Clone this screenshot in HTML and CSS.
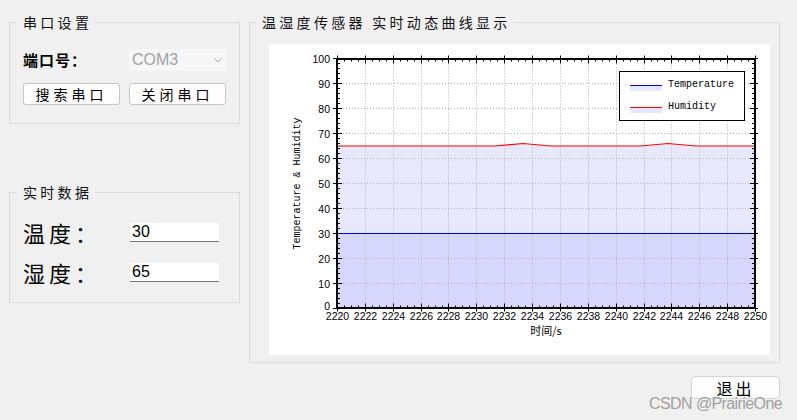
FILE: index.html
```html
<!DOCTYPE html>
<html lang="zh-CN">
<head>
    <meta charset="UTF-8">
    <meta name="viewport" content="width=device-width, initial-scale=1.0">
    <title>温湿度传感器</title>
    <link rel="stylesheet" href="styles.css">
</head>
<body>
    <div class="window">
        <div class="side">
            <fieldset class="group serial-group">
                <legend>串口设置</legend>
                <div class="serial-grid">
                    <span class="port-label">端口号：</span>
                    <div class="combo">
                        <span>COM3</span>
                        <svg class="chevron" width="8" height="5" viewBox="0 0 8 5"><polyline points="0.5,0.5 4,4 7.5,0.5" fill="none" stroke="#a6a6a6"/></svg>
                    </div>
                    <button class="btn">搜索串口</button>
                    <button class="btn">关闭串口</button>
                </div>
            </fieldset>
            <fieldset class="group data-group">
                <legend>实时数据</legend>
                <div class="data-grid">
                    <span class="data-label">温度：</span>
                    <input class="value-box" type="text" value="30">
                    <span class="data-label">湿度：</span>
                    <input class="value-box" type="text" value="65">
                </div>
            </fieldset>
        </div>
        <div class="main">
            <fieldset class="group chart-group">
                <legend>温湿度传感器 实时动态曲线显示</legend>
                <div class="chart-box">
                    <svg id="chart" width="501" height="311" viewBox="0 0 501 311"></svg>
                </div>
            </fieldset>
            <button class="btn exit-btn">退出</button>
        </div>
    </div>
    <div class="watermark">CSDN @PrairieOne</div>

    <script>
        const svg = document.getElementById('chart');
        const NS = 'http://www.w3.org/2000/svg';

        // plot area inside the white box
        const L = 68, R = 486, T = 14.5, B = 264.5;
        const X0 = 2220, X1 = 2250;
        const sx = v => L + (v - X0) * (R - L) / (X1 - X0);
        const sy = v => B - v * (B - T) / 100;

        function add(tag, attrs, parent) {
            const el = document.createElementNS(NS, tag);
            for (const k in attrs) el.setAttribute(k, attrs[k]);
            (parent || svg).appendChild(el);
            return el;
        }

        const humidity = [[2220, 65], [2231.35, 65], [2233.35, 66], [2235.35, 65],
                          [2241.76, 65], [2243.76, 66], [2245.76, 65], [2250, 65]];
        const temperature = [[2220, 30], [2250, 30]];

        function pts(data) {
            return data.map(p => sx(p[0]).toFixed(2) + ',' + sy(p[1]).toFixed(2)).join(' ');
        }
        function area(data) {
            return pts(data) + ' ' + R + ',' + B + ' ' + L + ',' + B;
        }

        // filled areas
        add('polygon', { points: area(humidity), fill: '#e8e8fd' });
        add('polygon', { points: area(temperature), fill: '#d7d7fd' });

        // dotted grid
        for (let v = 10; v < 100; v += 10) {
            add('line', { x1: L, x2: R, y1: sy(v), y2: sy(v), class: 'grid' });
        }
        for (let v = X0 + 2; v < X1; v += 2) {
            const x = Math.round(sx(v)) + 0.5;
            add('line', { x1: x, x2: x, y1: T, y2: B, class: 'grid' });
        }

        // curves
        add('polyline', { points: pts(humidity), fill: 'none', stroke: '#ff0000', 'stroke-width': 1.2 });
        add('polyline', { points: pts(temperature), fill: 'none', stroke: '#0000e0', 'stroke-width': 1 });

        // axes box
        add('rect', { x: L, y: T + 0.5, width: R - L, height: B - T - 1, fill: 'none', stroke: '#000', 'stroke-width': 2 });

        // x ticks
        for (let i = 0; i <= 60; i++) {
            const x = Math.round(sx(X0 + i / 2)) + 0.5;
            const major = i % 4 === 0;
            add('line', { x1: x, x2: x, y1: B, y2: B - (major ? 5 : 3), class: 'tick' });
            add('line', { x1: x, x2: x, y1: T, y2: T + (major ? 5 : 3), class: 'tick' });
            if (major) {
                add('line', { x1: x, x2: x, y1: B, y2: B + 3, class: 'tick' });
                add('line', { x1: x, x2: x, y1: T, y2: T - 3, class: 'tick' });
                const t = add('text', { x: x, y: 275.5, 'text-anchor': 'middle', class: 'tick-label' });
                t.textContent = X0 + i / 2;
            }
        }

        // y ticks
        for (let v = 0; v <= 100; v += 2) {
            const y = sy(v);
            const major = v % 10 === 0;
            add('line', { x1: L, x2: L + (major ? 5 : 3), y1: y, y2: y, class: 'tick' });
            add('line', { x1: R, x2: R - (major ? 5 : 3), y1: y, y2: y, class: 'tick' });
            if (major) {
                add('line', { x1: L, x2: L - 4, y1: y, y2: y, class: 'tick' });
                add('line', { x1: R, x2: R + 3, y1: y, y2: y, class: 'tick' });
                const t = add('text', { x: 61, y: v === 0 ? y + 1 : y + 4, 'text-anchor': 'end', class: 'tick-label' });
                t.textContent = v;
            }
        }

        // axis titles
        const yt = add('text', { transform: 'translate(31,139.5) rotate(-90)', 'text-anchor': 'middle', class: 'mono-label' });
        yt.textContent = 'Temperature & Humidity';
        const xt = add('text', { x: 277, y: 291, 'text-anchor': 'middle', class: 'axis-title' });
        xt.textContent = '时间/s';

        // legend
        add('rect', { x: 350.5, y: 27.5, width: 125, height: 49, fill: '#fff', stroke: '#000' });
        const items = [['Temperature', '#0000e0', 41.5, 43], ['Humidity', '#ff0000', 63.5, 65]];
        items.forEach(it => {
            add('rect', { x: 361, y: it[2] + 0.5, width: 32, height: 5, fill: '#e6e6fd' });
            add('line', { x1: 361, x2: 393, y1: it[2], y2: it[2], stroke: it[1] });
            const t = add('text', { x: 399, y: it[3], class: 'mono-label' });
            t.textContent = it[0];
        });
    </script>
</body>
</html>
```

FILE: styles.css
```css
* {
    box-sizing: border-box;
}

body {
    margin: 0;
    width: 797px;
    height: 420px;
    overflow: hidden;
    position: relative;
    background: #f0f0f0;
    color: #000;
    font-family: "Noto Sans CJK SC", sans-serif;
}

.window {
    display: flex;
    gap: 9px;
    padding: 12px 0 0 9px;
}

.side {
    width: 231px;
    display: flex;
    flex-direction: column;
}

.main {
    width: 531px;
    display: flex;
    flex-direction: column;
}

/* group boxes */
.group {
    margin: 0;
    min-width: 0;
    border: 1px solid #d9d9d9;
}

.group legend {
    font-size: 14px;
    line-height: 20px;
    letter-spacing: 3.3px;
    padding: 0 3px 0 6px;
    color: #111;
}

.serial-group {
    padding: 17px 0 18px 7px;
}

.serial-grid {
    margin-left: 6px;
    display: grid;
    grid-template-columns: 97px 98px;
    grid-template-rows: 22px 22px;
    column-gap: 9px;
    row-gap: 12px;
    align-items: center;
}

.port-label {
    font-size: 15px;
    font-weight: bold;
    letter-spacing: 1px;
    line-height: 22px;
}

.combo {
    height: 22px;
    background: #f6f6f6;
    display: flex;
    align-items: center;
    justify-content: space-between;
    padding: 0 5px 0 3px;
    color: #a2a2a2;
    font-family: "Liberation Sans Narrow", "Liberation Sans", sans-serif;
    font-size: 16px;
}

.btn {
    width: 97px;
    height: 22px;
    padding: 0;
    background: #fdfdfd;
    border: 1px solid #c6c6c6;
    border-radius: 3px;
    color: #000;
    font-family: "Noto Sans CJK SC", sans-serif;
    font-size: 14px;
    line-height: 20px;
    letter-spacing: 4px;
}

.data-group {
    margin-top: 58px;
    padding: 18px 0 18px 7px;
}

.data-grid {
    margin-left: 6px;
    display: grid;
    grid-template-columns: 107px 89px;
    grid-template-rows: 24px 24px;
    row-gap: 16px;
    align-items: center;
}

.data-label {
    font-size: 22px;
    line-height: 24px;
    letter-spacing: 4px;
}

.value-box {
    width: 89px;
    height: 19px;
    border: 0;
    border-bottom: 1px solid #7a7a7a;
    background: #fff;
    padding: 0 2px;
    outline: none;
    color: #000;
    font-family: "Liberation Sans", sans-serif;
    font-size: 16px;
}

/* chart */
.chart-group {
    padding: 12px 9px 7px 6px;
}

.chart-box {
    margin-left: 13px;
    width: 501px;
    height: 311px;
    background: #fff;
}

#chart {
    display: block;
}

#chart .grid {
    stroke: #b0b0b0;
    stroke-width: 1;
    stroke-dasharray: 1 2;
}

#chart .tick {
    stroke: #000;
    stroke-width: 1;
}

#chart .tick-label {
    font-family: "Liberation Sans", sans-serif;
    font-size: 10.5px;
    fill: #000;
}

#chart .mono-label {
    font-family: "Liberation Mono", monospace;
    font-size: 10px;
    fill: #000;
}

#chart .axis-title {
    font-family: "Noto Sans CJK SC", sans-serif;
    font-size: 11px;
    fill: #000;
}

.exit-btn {
    align-self: flex-end;
    margin-top: 13px;
    width: 89px;
    height: 23px;
    font-size: 16px;
    letter-spacing: 3px;
    border-color: #d2d2d2;
    border-radius: 4px;
}

.watermark {
    position: absolute;
    right: 15px;
    top: 394px;
    font-family: "Liberation Sans Narrow", "Liberation Sans", sans-serif;
    font-size: 16px;
    line-height: 20px;
    letter-spacing: -0.6px;
    color: #a0a0a0;
}
```
